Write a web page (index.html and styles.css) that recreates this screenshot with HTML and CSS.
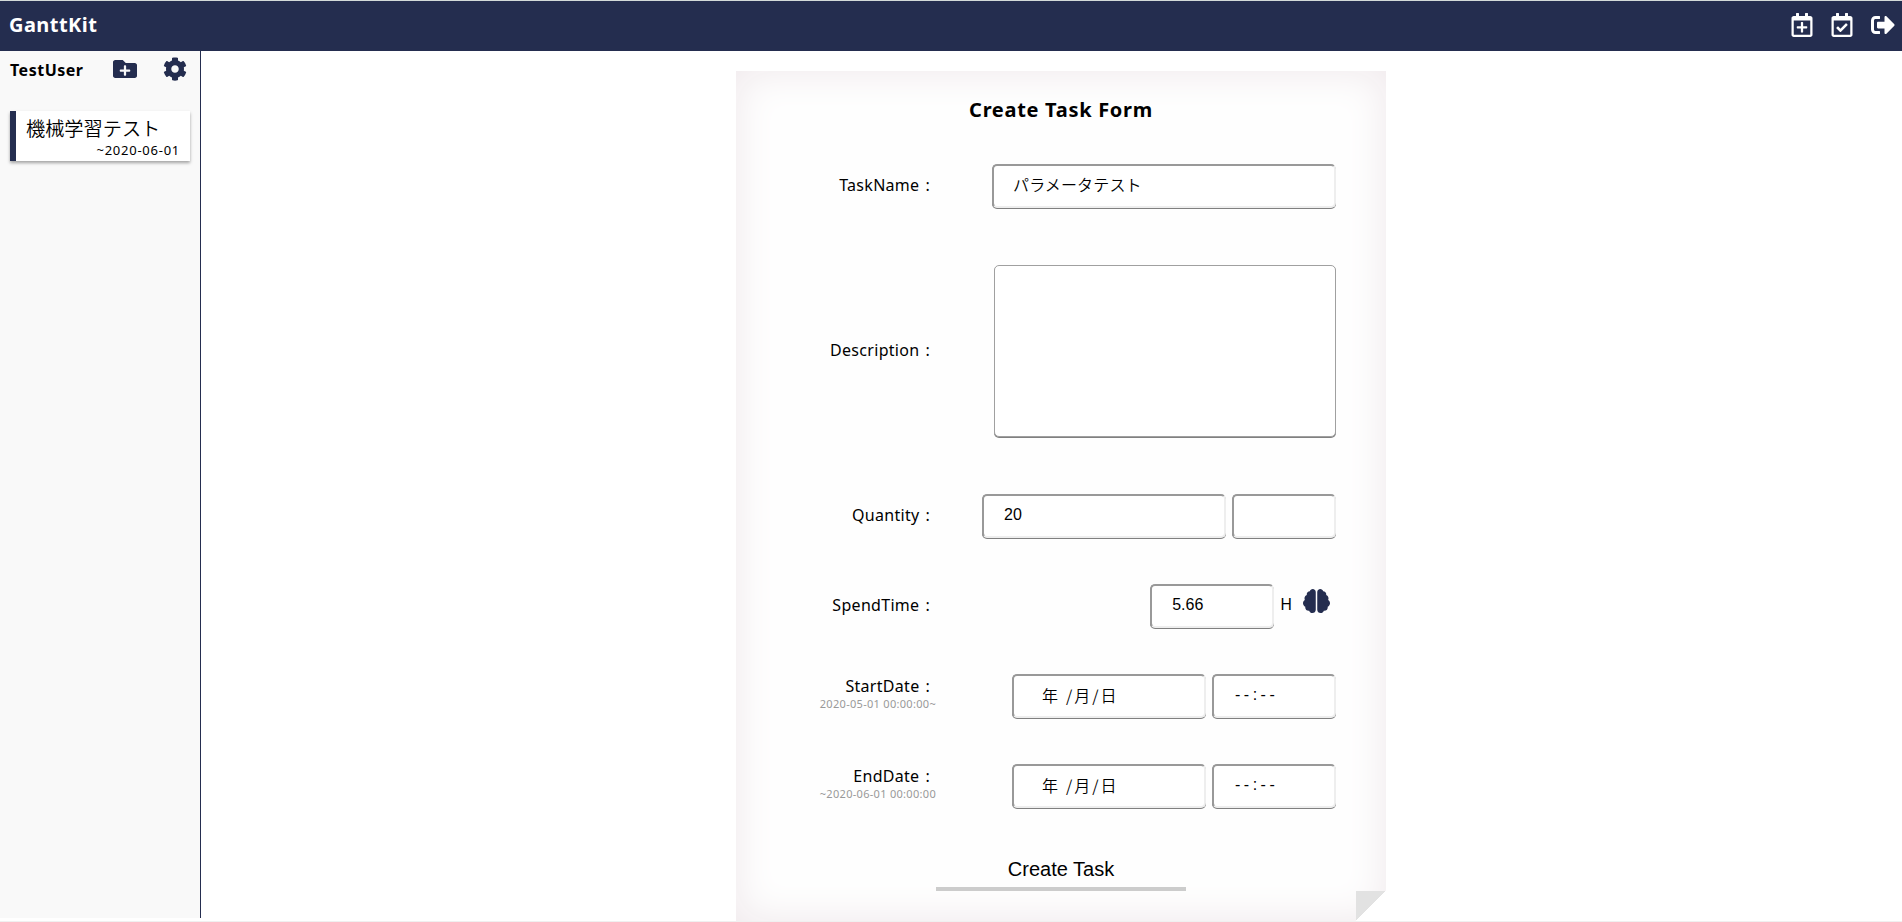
FILE: index.html
```html
<!DOCTYPE html>
<html lang="ja">
<head>
<meta charset="utf-8">
<title>GanttKit</title>
<link rel="stylesheet" href="styles.css">
</head>
<body>
<header class="header">
  <h1 class="brand">GanttKit</h1>
  <nav class="nav">
    <svg class="icon icon-cal" viewBox="0 0 448 512"><path d="M336 292v24c0 6.600-5.400 12-12 12h-76v76c0 6.600-5.400 12-12 12h-24c-6.600 0-12-5.400-12-12v-76h-76c-6.600 0-12-5.400-12-12v-24c0-6.600 5.400-12 12-12h76v-76c0-6.600 5.400-12 12-12h24c6.600 0 12 5.400 12 12v76h76c6.600 0 12 5.400 12 12zm112-180v352c0 26.500-21.500 48-48 48H48c-26.500 0-48-21.500-48-48V112c0-26.500 21.500-48 48-48h48V12c0-6.600 5.400-12 12-12h40c6.600 0 12 5.400 12 12v52h128V12c0-6.600 5.400-12 12-12h40c6.600 0 12 5.400 12 12v52h48c26.500 0 48 21.500 48 48zm-48 346V160H48v298c0 3.300 2.700 6 6 6h340c3.300 0 6-2.700 6-6z"/></svg>
    <svg class="icon icon-cal" viewBox="0 0 448 512"><path d="M400 64h-48V12c0-6.627-5.373-12-12-12h-40c-6.627 0-12 5.373-12 12v52H160V12c0-6.627-5.373-12-12-12h-40c-6.627 0-12 5.373-12 12v52H48C21.490 64 0 85.490 0 112v352c0 26.510 21.490 48 48 48h352c26.510 0 48-21.490 48-48V112c0-26.510-21.490-48-48-48zm-6 400H54a6 6 0 0 1-6-6V160h352v298a6 6 0 0 1-6 6zm-52.849-200.650L198.842 404.519c-4.705 4.667-12.303 4.637-16.971-.068l-75.091-75.699c-4.667-4.705-4.637-12.303.068-16.971l22.719-22.536c4.705-4.667 12.303-4.637 16.970.069l44.104 44.461 111.072-110.181c4.705-4.667 12.303-4.637 16.971.068l22.536 22.718c4.667 4.705 4.636 12.303-.069 16.970z"/></svg>
    <svg class="icon" viewBox="0 0 512 512"><path d="M497 273L329 441c-15 15-41 4.500-41-17v-96H152c-13.300 0-24-10.700-24-24v-96c0-13.300 10.700-24 24-24h136V88c0-21.400 25.900-32 41-17l168 168c9.300 9.400 9.300 24.600 0 34zM192 436v-40c0-6.600-5.400-12-12-12H96c-17.700 0-32-14.300-32-32V160c0-17.700 14.300-32 32-32h84c6.600 0 12-5.400 12-12V76c0-6.600-5.400-12-12-12H96c-53 0-96 43-96 96v192c0 53 43 96 96 96h84c6.600 0 12-5.400 12-12z"/></svg>
  </nav>
</header>
<div class="layout">
  <aside class="sidebar">
    <div class="user">
      <span class="user-name">TestUser</span>
      <svg class="icon" viewBox="0 0 512 512"><path d="M464 128H272l-64-64H48C21.490 64 0 85.490 0 112v288c0 26.510 21.490 48 48 48h416c26.510 0 48-21.490 48-48V176c0-26.510-21.490-48-48-48zm-96 168c0 8.840-7.160 16-16 16h-72v72c0 8.840-7.160 16-16 16h-16c-8.840 0-16-7.160-16-16v-72h-72c-8.840 0-16-7.160-16-16v-16c0-8.840 7.160-16 16-16h72v-72c0-8.840 7.160-16 16-16h16c8.840 0 16 7.160 16 16v72h72c8.840 0 16 7.160 16 16v16z"/></svg>
      <svg class="icon" viewBox="0 0 512 512"><path d="M487.400 315.700l-42.600-24.600c4.300-23.200 4.300-47 0-70.200l42.600-24.600c4.900-2.800 7.100-8.600 5.500-14-11.100-35.600-30-67.800-54.700-94.600-3.800-4.100-10-5.100-14.800-2.300L380.800 110c-17.900-15.400-38.500-27.300-60.800-35.100V25.800c0-5.600-3.900-10.500-9.400-11.700-36.700-8.200-74.300-7.800-109.200 0-5.500 1.200-9.400 6.100-9.400 11.700V75c-22.200 7.900-42.800 19.800-60.800 35.100L88.700 85.500c-4.900-2.800-11-1.900-14.800 2.300-24.700 26.700-43.600 58.900-54.700 94.600-1.700 5.400.6 11.200 5.500 14L67.300 221c-4.300 23.200-4.300 47 0 70.200l-42.600 24.600c-4.900 2.800-7.100 8.600-5.500 14 11.100 35.600 30 67.800 54.700 94.600 3.800 4.100 10 5.100 14.800 2.300l42.600-24.600c17.900 15.400 38.500 27.300 60.800 35.100v49.200c0 5.600 3.900 10.500 9.400 11.700 36.700 8.200 74.300 7.800 109.200 0 5.500-1.200 9.400-6.100 9.400-11.700v-49.200c22.200-7.900 42.800-19.800 60.800-35.100l42.600 24.600c4.900 2.800 11 1.900 14.800-2.300 24.700-26.700 43.600-58.900 54.700-94.600 1.500-5.500-.7-11.300-5.600-14.100zM256 336c-44.100 0-80-35.900-80-80s35.900-80 80-80 80 35.900 80 80-35.900 80-80 80z"/></svg>
    </div>
    <div class="project">
      <div class="project-name">機械学習テスト</div>
      <div class="project-date">~2020-06-01</div>
    </div>
  </aside>
  <main class="main">
    <form class="paper">
      <h2 class="title">Create Task Form</h2>
      <div class="row row-name">
        <div class="label">TaskName :</div>
        <div class="fields"><input class="input w-name" type="text" value="パラメータテスト"></div>
      </div>
      <div class="row row-desc">
        <div class="label">Description :</div>
        <div class="fields"><textarea class="textarea"></textarea></div>
      </div>
      <div class="row">
        <div class="label">Quantity :</div>
        <div class="fields"><input class="input w-qty" type="text" value="20"><input class="input w-unit" type="text"></div>
      </div>
      <div class="row">
        <div class="label">SpendTime :</div>
        <div class="fields"><input class="input w-time" type="text" value="5.66"><span class="unit">H</span><svg class="brain" viewBox="0 0 576 512"><path d="M208 0c-29.900 0-54.700 20.500-61.800 48.200-.8 0-1.400-.2-2.200-.2-35.300 0-64 28.700-64 64 0 4.800.6 9.500 1.700 14C52.500 138 32 166.600 32 200c0 12.600 3.200 24.300 8.300 34.900C16.300 248.700 0 274.300 0 304c0 33.300 20.400 61.900 49.400 73.900-.9 4.600-1.400 9.300-1.400 14.100 0 39.800 32.200 72 72 72 4.100 0 8.100-.5 12-1.200 9.600 28.500 36.200 49.200 68 49.200 39.800 0 72-32.200 72-72V64c0-35.300-28.700-64-64-64zm368 304c0-29.700-16.300-55.300-40.300-69.100 5.200-10.600 8.300-22.300 8.300-34.900 0-33.400-20.500-62-49.700-74 1-4.500 1.700-9.200 1.700-14 0-35.300-28.700-64-64-64-.8 0-1.500.2-2.200.2C422.700 20.500 397.900 0 368 0c-35.300 0-64 28.600-64 64v376c0 39.800 32.200 72 72 72 31.800 0 58.400-20.700 68-49.200 3.900.7 7.900 1.200 12 1.200 39.800 0 72-32.200 72-72 0-4.800-.5-9.500-1.400-14.100 29-12 49.400-40.600 49.400-73.900z"/></svg></div>
      </div>
      <div class="row">
        <div class="label label-range">StartDate :<small class="range">2020-05-01 00:00:00~</small></div>
        <div class="fields"><div class="input w-date"><span>年</span><span class="month">/月/日</span></div><div class="input w-time clock">--:--</div></div>
      </div>
      <div class="row">
        <div class="label label-range">EndDate :<small class="range">~2020-06-01 00:00:00</small></div>
        <div class="fields"><div class="input w-date"><span>年</span><span class="month">/月/日</span></div><div class="input w-time clock">--:--</div></div>
      </div>
      <button class="submit" type="button">Create Task</button>
      <span class="fold"></span>
    </form>
  </main>
</div>
</body>
</html>
```

FILE: styles.css
```css
* { box-sizing: border-box; }

body {
  margin: 0;
  height: 922px;
  overflow: hidden;
  border-top: 1px solid #d3dad9;
  border-bottom: 1px solid #f0f0f0;
  background: #fff;
  color: #000;
  font-family: "Noto Sans", "Noto Sans CJK JP", sans-serif;
  font-size: 16px;
}

.header {
  display: flex;
  justify-content: space-between;
  align-items: center;
  height: 50px;
  padding: 0 7px 0 9px;
  background: #242d4f;
  color: #fff;
}

.brand {
  margin: 0;
  padding-bottom: 2px;
  font-size: 20px;
  line-height: 30px;
  letter-spacing: .45px;
}

.nav { display: flex; gap: 18px; padding-bottom: 2px; }

.icon { display: block; width: 24px; height: 24px; fill: currentColor; }
.icon-cal { width: 22px; }

.layout { display: flex; height: 870px; }

.sidebar {
  width: 201px;
  height: 867px;
  padding: 0 10px;
  border-right: 1px solid #242d4f;
  background: #f9f9f9;
}

.user {
  display: flex;
  align-items: center;
  height: 36px;
  color: #242d4f;
}

.user-name {
  width: 103px;
  padding-top: 2px;
  color: #000;
  font-weight: 700;
  letter-spacing: .5px;
}
.user .icon + .icon { margin-left: 26px; }

.project {
  height: 50px;
  margin-top: 24px;
  padding: 3px 10px 0;
  border-left: 6px solid #242d4f;
  background: #fff;
  box-shadow: 0 2px 3px rgba(0, 0, 0, .35);
}

.project-name {
  font-family: "Noto Sans CJK JP", sans-serif;
  font-size: 19.2px;
  font-weight: 350;
  line-height: 28px;
  white-space: nowrap;
}

.project-date {
  font-size: 13px;
  line-height: 16px;
  letter-spacing: .75px;
  text-align: right;
}

.main { flex: 1; padding: 20px 0 0 535px; }

.paper {
  position: relative;
  display: flex;
  flex-direction: column;
  width: 650px;
  height: 850px;
  padding: 24px 50px 0;
  background: #fefefe;
  box-shadow: inset 0 0 40px #efe8eb;
}

.title {
  margin: 0 0 38px;
  font-size: 20px;
  line-height: 30px;
  letter-spacing: .7px;
  text-align: center;
}

.row { display: flex; align-items: center; height: 45px; margin-bottom: 45px; }
.row-name { margin-bottom: 56px; }
.row-desc { height: 173px; margin-bottom: 56px; }

.label {
  width: 144px;
  padding-bottom: 2px;
  line-height: 24px;
  letter-spacing: .3px;
  word-spacing: 1.5px;
  text-align: right;
}
.label-range { width: 149px; padding: 0 5px 2px 0; line-height: 18px; white-space: nowrap; }
.range {
  display: block;
  margin-right: -6px;
  color: #999;
  font-size: 11px;
  line-height: 17px;
  word-spacing: 0;
}

.fields { flex: 1; display: flex; justify-content: flex-end; gap: 6px; }

.input {
  height: 44px;
  padding: 0 18px 2px 20px;
  border: 2px solid;
  border-color: #999 #eee #eee #999;
  border-radius: 5px;
  background: #fff;
  box-shadow: 0 1px 0 #808080;
  color: #000;
  font: 16px "Liberation Sans", "Noto Sans CJK JP", sans-serif;
  line-height: 38px;
}

.w-name {
  width: 344px;
  padding-left: 19px;
  padding-bottom: 4px;
  font-family: "Noto Sans CJK JP", sans-serif;
  font-weight: 350;
  letter-spacing: .15px;
}
.w-qty { width: 244px; }
.w-unit { width: 104px; }
.w-time { width: 124px; }
.w-date {
  display: flex;
  gap: 8px;
  width: 194px;
  padding-left: 28px;
  font-family: "Noto Sans CJK JP", sans-serif;
  font-weight: 350;
}
.month { letter-spacing: 2px; }
.clock { padding-left: 21px; letter-spacing: 3.5px; }

.textarea {
  display: block;
  width: 342px;
  height: 172px;
  border: 1px solid #a0a0a0;
  border-radius: 5px;
  background: #fff;
  box-shadow: 0 1px 0 #808080;
  resize: none;
}

.unit { line-height: 40px; }
.brain { width: 27px; height: 24px; margin: 5px 6px 0 5px; fill: #242d4f; }

.submit {
  align-self: center;
  width: 250px;
  height: 44px;
  margin-top: -6px;
  padding: 4px 0 0;
  border: 0;
  border-bottom: 4px solid #ccc;
  background: transparent;
  color: #000;
  font: 20px "Liberation Sans", sans-serif;
}

.fold {
  position: absolute;
  right: 0;
  bottom: 0;
  width: 30px;
  height: 30px;
  background: linear-gradient(135deg, #e2e2e2 50%, #fff 50%);
}
```
